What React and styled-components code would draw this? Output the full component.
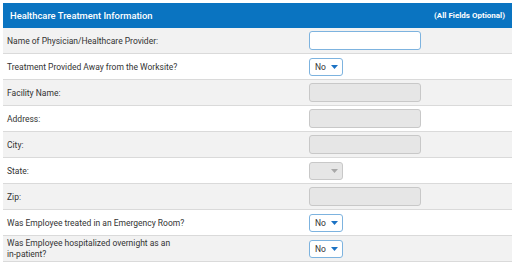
import React from 'react';
import styled, { createGlobalStyle } from 'styled-components';

const Global = createGlobalStyle`
  html, body { margin: 0; padding: 0; background: #fff; }
  body { font-family: Roboto, "Liberation Sans", Arial, sans-serif; }
`;

const Page = styled.div`
  padding: 3px 3px 0 3px;
`;

const Panel = styled.section`
  width: 509px;
`;

const Header = styled.header`
  height: 25px;
  background: #0a74c1;
  color: #fff;
  display: flex;
  align-items: center;
  justify-content: space-between;
  padding: 0 7px 0 7px;
  box-sizing: border-box;
`;

const Title = styled.h2`
  margin: 0;
  font-size: 9.4px;
  font-weight: 500;
`;

const Note = styled.span`
  font-size: 8px;
  font-weight: 700;
`;

const Row = styled.div`
  display: grid;
  grid-template-columns: 306px 1fr;
  align-items: center;
  min-height: 26px;
  box-sizing: border-box;
  border-bottom: 1px solid #dadada;
  background: ${(p) => (p.$alt ? '#f2f2f2' : '#fff')};
`;

const Label = styled.label`
  padding: 1px 0 0 4px;
  max-width: 185px;
  font-size: 8.5px;
  line-height: 11px;
  color: #333;
`;

const Keep = styled.span`
  white-space: nowrap;
`;

const TextBox = styled.div`
  width: 112px;
  height: 19px;
  box-sizing: border-box;
  border-radius: 3px;
  border: 1px solid ${(p) => (p.$disabled ? '#c8c8c8' : '#7db3df')};
  background: ${(p) => (p.$disabled ? '#e6e6e6' : '#fff')};
`;

const Select = styled.div`
  width: 34px;
  height: 18px;
  box-sizing: border-box;
  border-radius: 3px;
  border: 1px solid ${(p) => (p.$disabled ? '#c8c8c8' : '#7db3df')};
  background: ${(p) => (p.$disabled ? '#e6e6e6' : '#fff')};
  display: flex;
  align-items: center;
  padding: 0 4px 0 5px;
  font-size: 8.5px;
  color: #333;
`;

const Value = styled.span`
  flex: 1;
`;

const Caret = ({ color }) => (
  <svg width="7" height="4" viewBox="0 0 7 4">
    <path d="M0 0h7L3.5 4z" fill={color} />
  </svg>
);

const fields = [
  { label: 'Name of Physician/Healthcare Provider:', type: 'text' },
  { label: 'Treatment Provided Away from the Worksite?', type: 'select', value: 'No' },
  { label: 'Facility Name:', type: 'text', disabled: true },
  { label: 'Address:', type: 'text', disabled: true },
  { label: 'City:', type: 'text', disabled: true },
  { label: 'State:', type: 'select', disabled: true },
  { label: 'Zip:', type: 'text', disabled: true },
  { label: 'Was Employee treated in an Emergency Room?', type: 'select', value: 'No' },
  {
    label: (
      <>
        Was Employee hospitalized overnight as an <Keep>in-patient?</Keep>
      </>
    ),
    key: 'hospitalized',
    type: 'select',
    value: 'No',
  },
];

export default function App() {
  return (
    <Page>
      <Global />
      <Panel>
        <Header>
          <Title>Healthcare Treatment Information</Title>
          <Note>(All Fields Optional)</Note>
        </Header>
        {fields.map((f, i) => (
          <Row key={f.key || f.label} $alt={i % 2 === 0}>
            <Label>{f.label}</Label>
            {f.type === 'text' ? (
              <TextBox $disabled={f.disabled} />
            ) : (
              <Select $disabled={f.disabled}>
                <Value>{f.value}</Value>
                <Caret color={f.disabled ? '#a8a8a8' : '#1b72c4'} />
              </Select>
            )}
          </Row>
        ))}
      </Panel>
    </Page>
  );
}
